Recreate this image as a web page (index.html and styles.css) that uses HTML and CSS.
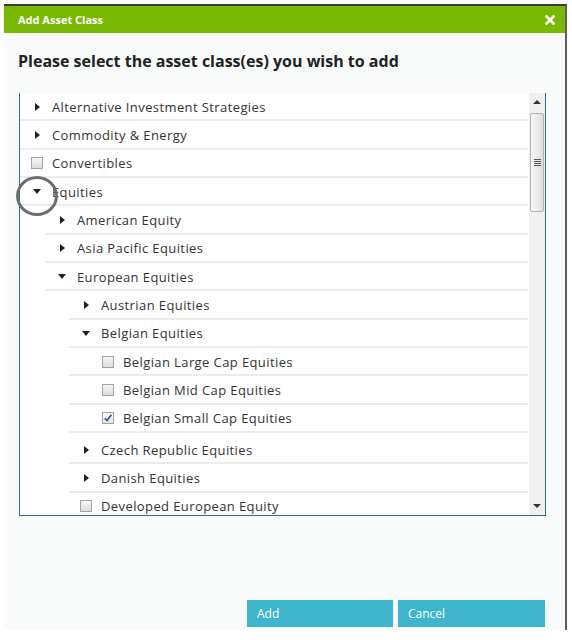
FILE: index.html
```html
<!DOCTYPE html>
<html>
<head>
<meta charset="utf-8">
<link rel="stylesheet" href="styles.css">
</head>
<body>
<div class="dialog">
  <div class="titlebar">
    <span>Add Asset Class</span>
    <svg class="close" width="10" height="10" viewBox="0 0 10 10"><path d="M1.5 1.5 L8.5 8.5 M8.5 1.5 L1.5 8.5" stroke="#fff" stroke-width="2.6" stroke-linecap="square"/></svg>
  </div>
  <div class="content">
    <h1>Please select the asset class(es) you wish to add</h1>
    <div class="treebox">
      <ul class="tree">
        <li><div class="row"><span class="ic"><i class="arr-r"></i></span><span>Alternative Investment Strategies</span></div></li>
        <li><div class="row"><span class="ic"><i class="arr-r"></i></span><span>Commodity &amp; Energy</span></div></li>
        <li><div class="row"><span class="ic"><i class="cb"></i></span><span>Convertibles</span></div></li>
        <li><div class="row"><span class="ic"><i class="arr-d"></i></span><span>Equities</span></div>
          <ul class="sub l2">
            <li><div class="row"><span class="ic"><i class="arr-r"></i></span><span>American Equity</span></div></li>
            <li><div class="row"><span class="ic"><i class="arr-r"></i></span><span>Asia Pacific Equities</span></div></li>
            <li><div class="row"><span class="ic"><i class="arr-d"></i></span><span>European Equities</span></div>
              <ul class="sub l3">
                <li><div class="row"><span class="ic"><i class="arr-r"></i></span><span>Austrian Equities</span></div></li>
                <li><div class="row"><span class="ic"><i class="arr-d"></i></span><span>Belgian Equities</span></div>
                  <ul class="sub l4">
                    <li><div class="row deep"><span class="ic"><i class="cb"></i></span><span>Belgian Large Cap Equities</span></div></li>
                    <li><div class="row deep"><span class="ic"><i class="cb"></i></span><span>Belgian Mid Cap Equities</span></div></li>
                    <li><div class="row deep"><span class="ic"><i class="cb checked"><svg width="10" height="10" viewBox="0 0 10 10"><path d="M1.8 5.2 L4 7.6 L8.4 1.8" fill="none" stroke="#2b4fa3" stroke-width="1.6"/></svg></i></span><span>Belgian Small Cap Equities</span></div></li>
                  </ul>
                </li>
                <li><div class="row"><span class="ic"><i class="arr-r"></i></span><span>Czech Republic Equities</span></div></li>
                <li><div class="row"><span class="ic"><i class="arr-r"></i></span><span>Danish Equities</span></div></li>
                <li><div class="row"><span class="ic"><i class="cb"></i></span><span>Developed European Equity</span></div></li>
              </ul>
            </li>
          </ul>
        </li>
      </ul>
      <div class="scrollbar">
        <div class="sb-btn"><i class="sb-up"></i></div>
        <div class="sb-track">
          <div class="thumb"><span class="grip"></span><span class="grip"></span><span class="grip"></span><span class="grip"></span></div>
        </div>
        <div class="sb-btn"><i class="sb-down"></i></div>
      </div>
    </div>
    <div class="actions">
      <button class="btn add">Add</button>
      <button class="btn cancel">Cancel</button>
    </div>
  </div>
</div>
<div class="annot"></div>
</body>
</html>
```
FILE: styles.css
```css
html, body {
  margin: 0;
  background: #ffffff;
}
body {
  font-family: "Open Sans", "Noto Sans", sans-serif;
  color: #333;
}
.dialog {
  margin: 4px 0 0 4px;
  width: 563px;
  height: 626px;
  box-sizing: border-box;
  border-top: 2px solid #3a3a3a;
  border-right: 2px solid #5e5e5e;
  background: #f9fbfb;
  display: flex;
  flex-direction: column;
}
.titlebar {
  height: 27px;
  flex: none;
  background: #78b800;
  display: flex;
  align-items: center;
  justify-content: space-between;
  padding: 0 10px 0 14px;
  color: #fff;
  font-weight: 700;
  font-size: 11px;
}
.close {
  display: block;
}
.content {
  flex: 1;
  display: flex;
  flex-direction: column;
  padding: 0 19px 3px 14px;
}
h1 {
  margin: 16px 0 20px 0;
  font-size: 16px;
  line-height: 24px;
  font-weight: 700;
  color: #222;
}
.treebox {
  margin-left: 1px;
  height: 423px;
  box-sizing: border-box;
  border: 1px solid #2e6c98;
  border-top: none;
  background: #fff;
  display: flex;
  overflow: hidden;
}
.tree, .sub {
  list-style: none;
  margin: 0;
  padding: 0;
}
.tree {
  flex: 1;
  margin-right: 1px;
}
.l2 { margin-left: 25px; }
.l3 { margin-left: 24px; }
.l4 { padding-bottom: 3px; }
.row {
  display: flex;
  align-items: center;
  height: 26.35px;
  padding-top: 1px;
  box-sizing: content-box;
  border-bottom: 2px solid #ececec;
  font-size: 13px;
  letter-spacing: 0.4px;
  color: #333;
  white-space: nowrap;
}
.row {
  height: 25.35px;
}
.row.deep { padding-left: 22px; }
.ic {
  width: 32px;
  flex: none;
  display: flex;
  align-items: center;
}
.arr-r {
  display: block;
  margin-left: 15px;
  width: 0;
  height: 0;
  border-left: 5px solid #222;
  border-top: 4px solid transparent;
  border-bottom: 4px solid transparent;
}
.arr-d {
  display: block;
  margin-left: 13px;
  width: 0;
  height: 0;
  border-top: 5px solid #222;
  border-left: 4.5px solid transparent;
  border-right: 4.5px solid transparent;
}
.cb {
  display: flex;
  align-items: center;
  justify-content: center;
  margin-left: 11px;
  width: 12px;
  height: 12px;
  box-sizing: border-box;
  border: 1px solid #a3a3a3;
  background: linear-gradient(#f6f6f6, #dcdcdc);
}
.cb.checked {
  background: linear-gradient(#fafafa, #e6e6e6);
}
.cb svg { display: block; }
.scrollbar {
  width: 16px;
  flex: none;
  background: #f0f0f0;
  display: flex;
  flex-direction: column;
}
.sb-btn {
  height: 18px;
  flex: none;
  display: flex;
  align-items: center;
  justify-content: center;
}
.sb-up {
  width: 0; height: 0;
  border-bottom: 4px solid #333;
  border-left: 4.5px solid transparent;
  border-right: 4.5px solid transparent;
}
.sb-down {
  width: 0; height: 0;
  border-top: 4px solid #333;
  border-left: 4.5px solid transparent;
  border-right: 4.5px solid transparent;
}
.sb-track {
  flex: 1;
  padding: 2px 1px 0 1px;
}
.thumb {
  height: 99px;
  box-sizing: border-box;
  border: 1px solid #b4b4b4;
  border-radius: 2px;
  background: linear-gradient(to right, #f7f7f7, #dedede);
  display: flex;
  flex-direction: column;
  align-items: center;
  justify-content: center;
  gap: 1px;
}
.grip {
  display: block;
  width: 7px;
  height: 1px;
  background: #555;
}
.actions {
  margin-top: auto;
  display: flex;
  justify-content: flex-end;
  gap: 5px;
  margin-right: 1px;
}
.btn {
  height: 27px;
  border: none;
  background: #3db5cd;
  color: #fff;
  font-family: "Open Sans", "Noto Sans", sans-serif;
  font-size: 12px;
  text-align: left;
  padding: 0 0 0 10px;
}
.btn.add { width: 146px; }
.btn.cancel { width: 147px; }
.annot {
  position: absolute;
  left: 16px;
  top: 176px;
  width: 42px;
  height: 40px;
  box-sizing: border-box;
  border: 3px solid #6e6e6e;
  border-radius: 50%;
}
```
